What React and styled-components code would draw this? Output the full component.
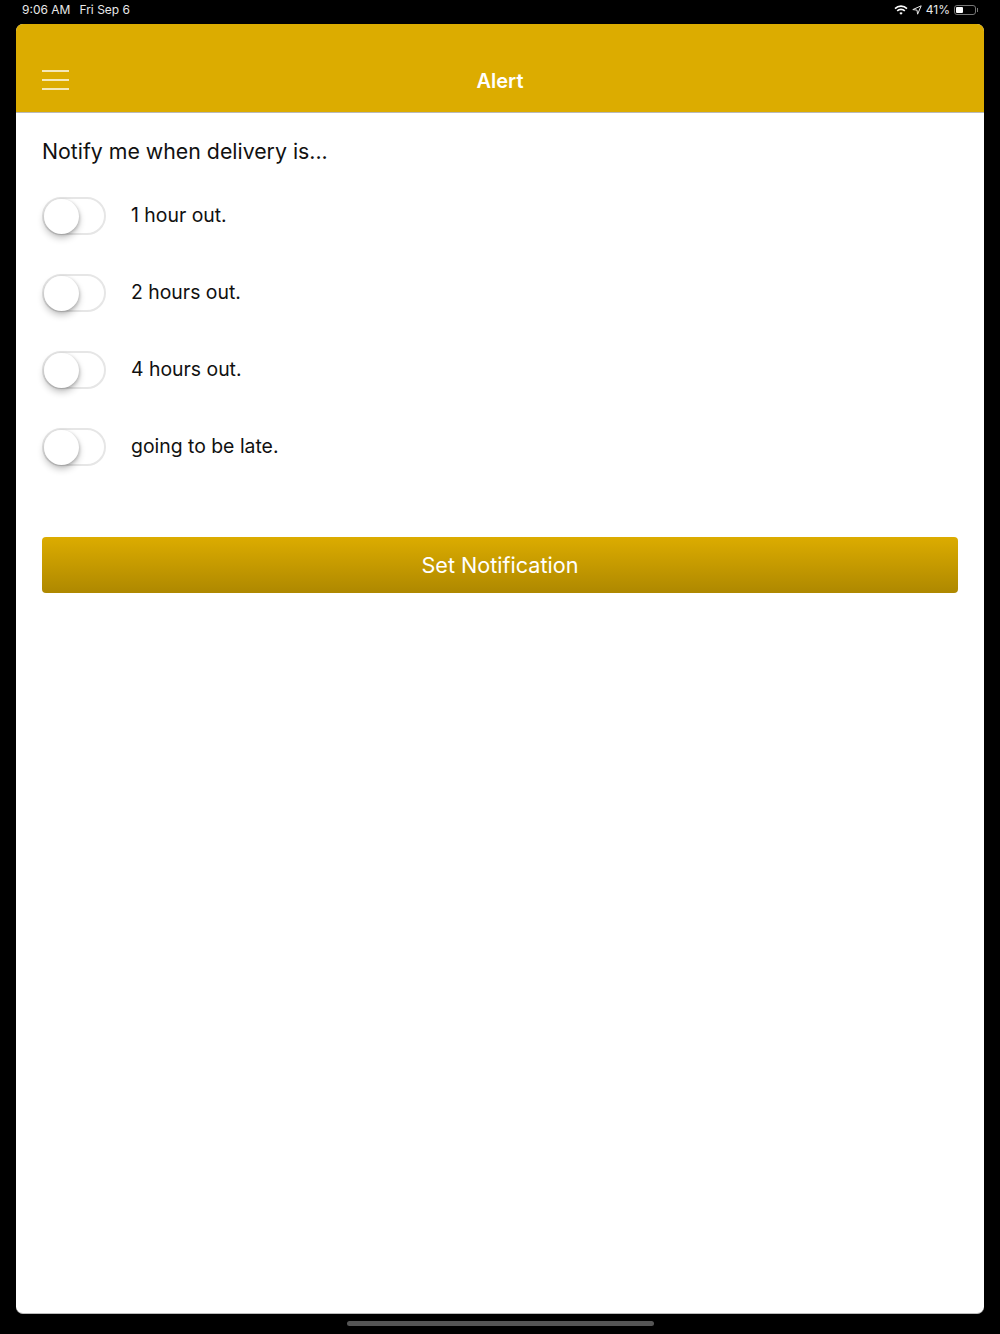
import { useState } from 'react';
import styled, { createGlobalStyle } from 'styled-components';

const GlobalStyle = createGlobalStyle`
  html, body {
    margin: 0;
    padding: 0;
    background: #000;
    font-family: Inter, 'Liberation Sans', sans-serif;
  }
`;

const Screen = styled.div`
  width: 1000px;
  height: 1334px;
  background: #000;
  display: flex;
  flex-direction: column;
  overflow: hidden;
`;

const StatusBar = styled.div`
  height: 24px;
  padding: 0 21px 5px 22px;
  box-sizing: border-box;
  display: flex;
  align-items: center;
  justify-content: space-between;
  color: #e8e8e8;
  font-size: 12px;
  flex: none;
`;

const StatusLeft = styled.div`
  display: flex;
  gap: 9px;
`;

const StatusRight = styled.div`
  display: flex;
  align-items: center;
  gap: 4px;
`;

const Battery = styled.div`
  position: relative;
  width: 22px;
  height: 10px;
  border: 1px solid #777;
  border-radius: 3px;
  padding: 1px;
  box-sizing: border-box;
  margin-right: 3px;
  &::after {
    content: '';
    position: absolute;
    right: -3px;
    top: 2px;
    width: 1px;
    height: 4px;
    background: #777;
  }
`;

const BatteryLevel = styled.div`
  height: 100%;
  background: #fff;
  border-radius: 1px;
`;

const Card = styled.div`
  width: 968px;
  height: 1290px;
  box-sizing: border-box;
  margin: 0 16px;
  background: #fff;
  border-bottom: 1px solid #bbb;
  border-radius: 7px;
  overflow: hidden;
  flex: none;
  display: flex;
  flex-direction: column;
`;

const Header = styled.header`
  height: 89px;
  box-sizing: border-box;
  padding: 26px 26px 0;
  background: #dcac00;
  border-bottom: 1px solid #b9b9b9;
  display: grid;
  grid-template-columns: 1fr auto 1fr;
  align-items: center;
  flex: none;
`;

const MenuButton = styled.div`
  width: 27px;
  display: flex;
  flex-direction: column;
  gap: 7px;
  margin-top: -2px;
`;

const MenuLine = styled.span`
  display: block;
  height: 2px;
  background: rgba(255, 255, 255, 0.72);
`;

const Title = styled.h1`
  margin: 0;
  color: #fff;
  font-size: 20px;
  font-weight: 600;
`;

const Content = styled.main`
  padding: 24px 26px 0;
  display: flex;
  flex-direction: column;
`;

const Heading = styled.p`
  margin: 0 0 32px;
  height: 28px;
  line-height: 28px;
  font-size: 21.3px;
  color: #111;
`;

const Options = styled.div`
  display: flex;
  flex-direction: column;
  gap: 39px;
`;

const Row = styled.label`
  height: 38px;
  display: flex;
  align-items: center;
  gap: 25px;
  font-size: 19.4px;
  color: #111;
`;

const RowLabel = styled.span`
  padding-bottom: 2px;
`;

const Track = styled.div`
  position: relative;
  width: 64px;
  height: 38px;
  box-sizing: border-box;
  border: 2px solid #e6e6e6;
  border-radius: 19px;
  background: ${(p) => (p.$on ? '#dcac00' : '#fff')};
`;

const Knob = styled.div`
  position: absolute;
  top: -0.5px;
  left: ${(p) => (p.$on ? '25px' : '-0.5px')};
  width: 35px;
  height: 35px;
  border-radius: 50%;
  background: #fff;
  box-shadow: 0 4px 7px rgba(0, 0, 0, 0.24), 1px 1px 3px rgba(0, 0, 0, 0.16);
`;

const SubmitButton = styled.button`
  display: block;
  width: 100%;
  height: 56px;
  margin-top: 71px;
  border: 0;
  border-radius: 4px;
  background: linear-gradient(#dcac00, #ae8800);
  color: #fff;
  font-family: inherit;
  font-size: 21.6px;
`;

const Footer = styled.div`
  flex: 1;
  display: flex;
  justify-content: center;
  padding-top: 7px;
`;

const HomeBar = styled.div`
  width: 307px;
  height: 5px;
  border-radius: 3px;
  background: #555;
`;

const options = ['1 hour out.', '2 hours out.', '4 hours out.', 'going to be late.'];

const WifiIcon = () => (
  <svg width="14" height="10" viewBox="0 0 14 10" fill="none" stroke="#fff" strokeWidth="1.6">
    <path d="M1 3.6a8.6 8.6 0 0 1 12 0" />
    <path d="M3.2 5.9a5.4 5.4 0 0 1 7.6 0" />
    <path d="M7 9.8 5.3 8a2.4 2.4 0 0 1 3.4 0Z" fill="#fff" stroke="none" />
  </svg>
);

const LocationIcon = () => (
  <svg width="10" height="10" viewBox="0 0 10 10" fill="none" stroke="#e8e8e8" strokeWidth="1" strokeLinejoin="round">
    <path d="M9.2 0.8 0.8 4.6 5 5.1 5.6 9.2Z" />
  </svg>
);

const App = () => {
  const [checked, setChecked] = useState({});
  const toggle = (key) => setChecked((prev) => ({ ...prev, [key]: !prev[key] }));

  return (
    <Screen>
      <GlobalStyle />
      <StatusBar>
        <StatusLeft>
          <span>9:06 AM</span>
          <span>Fri Sep 6</span>
        </StatusLeft>
        <StatusRight>
          <WifiIcon />
          <LocationIcon />
          <span>41%</span>
          <Battery>
            <BatteryLevel style={{ width: '41%' }} />
          </Battery>
        </StatusRight>
      </StatusBar>
      <Card>
        <Header>
          <MenuButton>
            <MenuLine />
            <MenuLine />
            <MenuLine />
          </MenuButton>
          <Title>Alert</Title>
        </Header>
        <Content>
          <Heading>Notify me when delivery is...</Heading>
          <Options>
            {options.map((label) => (
              <Row key={label} onClick={() => toggle(label)}>
                <Track $on={checked[label]}>
                  <Knob $on={checked[label]} />
                </Track>
                <RowLabel>{label}</RowLabel>
              </Row>
            ))}
          </Options>
          <SubmitButton>Set Notification</SubmitButton>
        </Content>
      </Card>
      <Footer>
        <HomeBar />
      </Footer>
    </Screen>
  );
};

export default App;
